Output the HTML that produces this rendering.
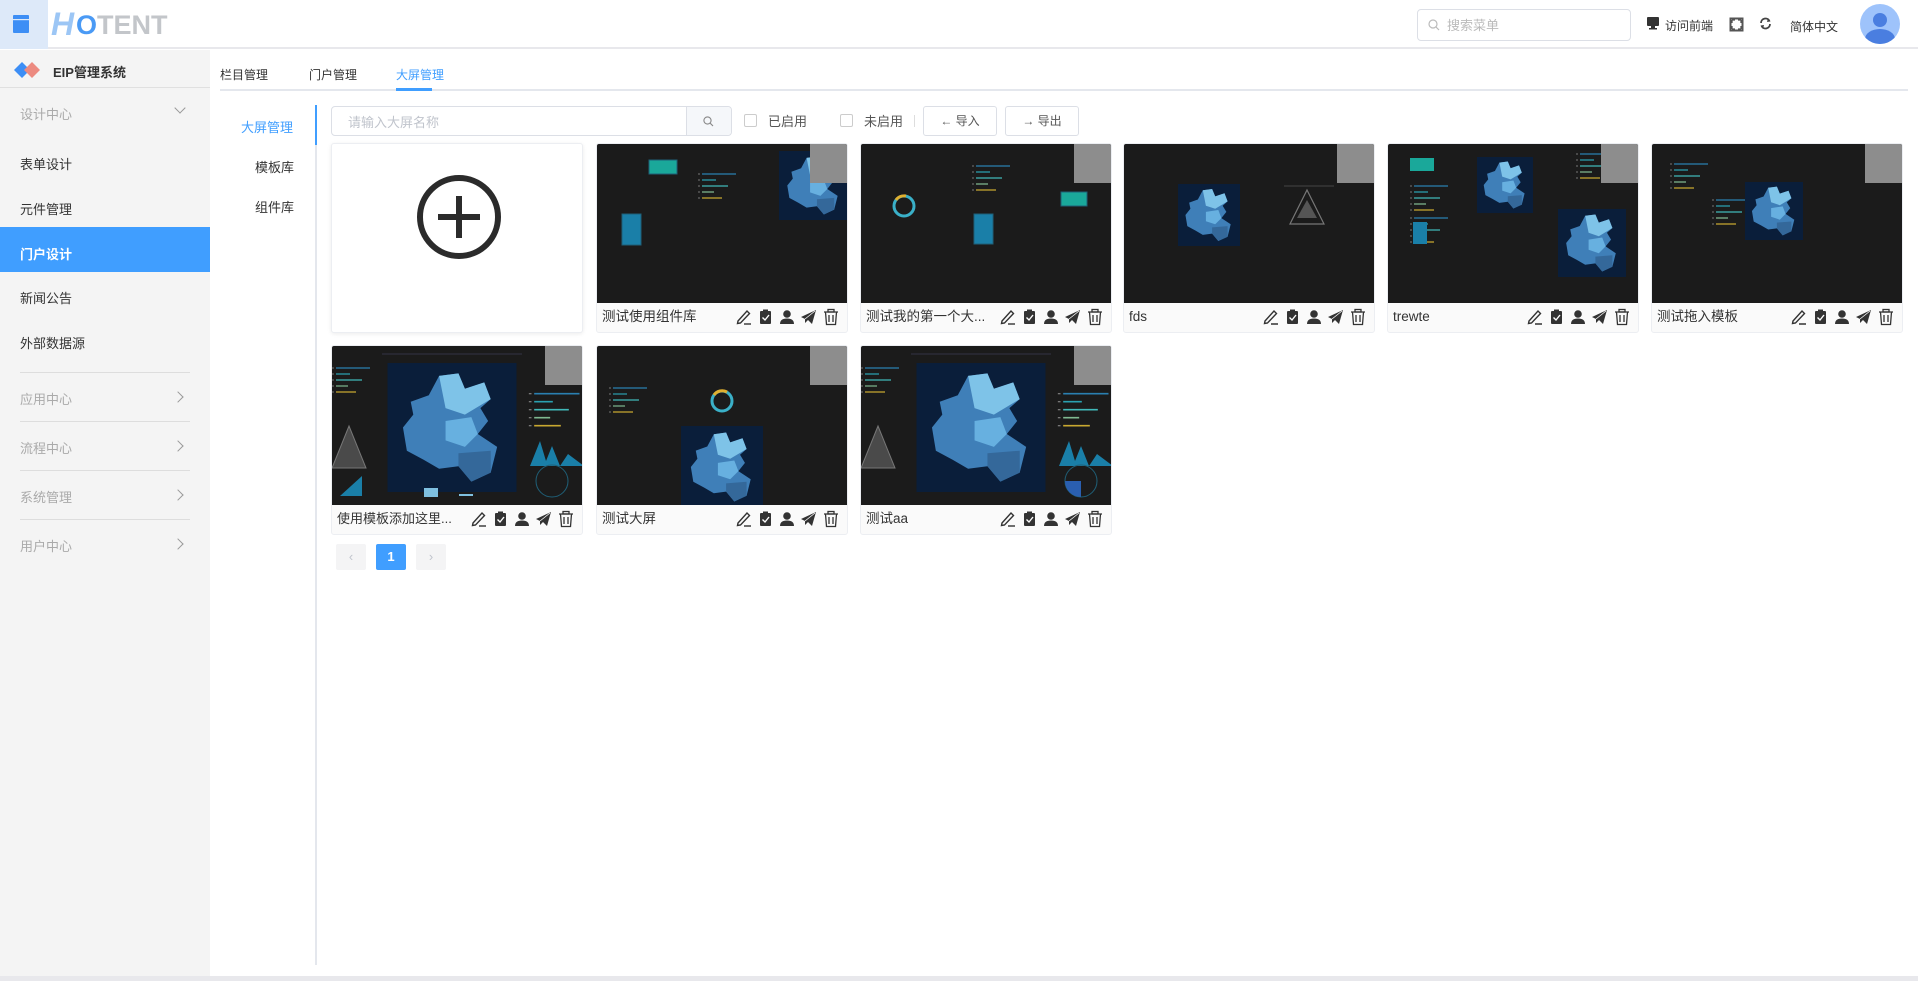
<!DOCTYPE html>
<html><head><meta charset="utf-8"><style>
*{box-sizing:border-box;margin:0;padding:0}
body{width:1918px;height:981px;overflow:hidden;background:#fff;font-family:"Liberation Sans","Noto Sans CJK SC",sans-serif;position:relative;color:#333}
.a{position:absolute}
.hdr{left:0;top:0;width:1918px;height:49px;background:#fff;border-bottom:2px solid #e8e8ec}
.side{left:0;top:50px;width:210px;height:931px;background:#f4f4f4}
.si{position:absolute;left:20px;font-size:13px;color:#333}
.sg{position:absolute;left:20px;font-size:13px;color:#aaa}
.sep{position:absolute;left:20px;width:170px;height:1px;background:#ddd}
.chev{position:absolute;left:176px;width:8px;height:8px;border-right:1.5px solid #999;border-top:1.5px solid #999;transform:rotate(45deg)}
.tab{font-size:12px;color:#333;top:66px}
.card{position:absolute;width:252px;height:190px;border:1px solid #eceef2;border-radius:3px;background:#fafafa;overflow:hidden}
.img{position:absolute;left:0;top:0;width:252px;height:159px;background:#1b1b1b}
.cor{position:absolute;right:0;top:0;width:39px;height:39px;background:#8d8d8d}
.ft{position:absolute;left:5px;top:163px;height:20px;line-height:20px;font-size:13.5px;color:#333}
.ic{position:absolute;top:164px}
.btn{position:absolute;top:106px;height:30px;border:1px solid #dcdfe6;border-radius:3px;font-size:12px;color:#555;text-align:center;line-height:28px;background:#fff}
.cb{position:absolute;top:114px;width:13px;height:13px;border:1px solid #ccc;border-radius:2px;background:#fff}
.pg{position:absolute;top:544px;width:30px;height:26px;border-radius:2px;background:#f4f4f5;color:#c0c4cc;text-align:center;line-height:26px;font-size:13px}
</style></head><body>
<svg width="0" height="0" style="position:absolute">
<defs>
<symbol id="map" viewBox="0 0 100 100"><rect width="100" height="100" fill="#0a1e3a"/><path d="M40 10 L55 8 L60 20 L75 15 L80 28 L72 35 L78 45 L70 55 L85 65 L80 85 L65 92 L55 80 L40 82 L28 75 L15 68 L12 50 L20 40 L18 30 L32 25 Z" fill="#3f7fb8"/><path d="M40 10 L55 8 L60 20 L75 15 L80 28 L60 40 L45 35 Z" fill="#7ec3e8"/><path d="M45 45 L65 42 L70 55 L60 65 L45 60 Z" fill="#67b0e0"/><path d="M55 70 L80 68 L80 85 L65 92 L55 80Z" fill="#34689a"/></symbol>
<symbol id="bars" viewBox="0 0 40 30"><g stroke-width="1.2"><line x1="4" y1="2" x2="38" y2="2" stroke="#2a7fb0"/><line x1="4" y1="8" x2="18" y2="8" stroke="#2aa0b0"/><line x1="4" y1="14" x2="30" y2="14" stroke="#40b8b8"/><line x1="4" y1="20" x2="16" y2="20" stroke="#7fb890"/><line x1="4" y1="26" x2="24" y2="26" stroke="#c8a830"/></g><g fill="#777"><rect x="0" y="1.5" width="2" height="1"/><rect x="0" y="7.5" width="2" height="1"/><rect x="0" y="13.5" width="2" height="1"/><rect x="0" y="19.5" width="2" height="1"/><rect x="0" y="25.5" width="2" height="1"/></g></symbol>
<symbol id="icons" viewBox="0 0 110 18">
<g fill="none" stroke="#333" stroke-width="1.4"><path d="M3 13 L12 3 L14.5 5.5 L5.5 15 L2.5 15.5 Z"/><line x1="9" y1="16" x2="16" y2="16"/></g>
<rect x="25" y="3" width="11" height="13" rx="1" fill="#333"/><rect x="28" y="1.5" width="5" height="3" fill="#333"/><path d="M27.5 9.5 L30 12 L34 7" stroke="#fff" stroke-width="1.4" fill="none"/>
<circle cx="52" cy="6" r="3.8" fill="#333"/><path d="M45 16 Q45 10.5 52 10.5 Q59 10.5 59 16 Z" fill="#333"/>
<path d="M66 9 L81 2 L77 16 L73 12 L70 15 L70 11 Z" fill="#333"/><path d="M70 11 L80 3" stroke="#fff" stroke-width=".8"/>
<g fill="none" stroke="#333" stroke-width="1.3"><line x1="89" y1="4" x2="103" y2="4"/><rect x="93" y="1.5" width="6" height="2.5"/><path d="M90.5 4 L91.5 16.5 L100.5 16.5 L101.5 4"/><line x1="94" y1="7" x2="94" y2="14"/><line x1="98" y1="7" x2="98" y2="14"/></g>
</symbol>
</defs></svg>

<!-- header -->
<div class="a hdr"></div>
<div class="a" style="left:0;top:0;width:48px;height:49px;background:#dde9f9"></div>
<svg class="a" style="left:13px;top:15px" width="16" height="18"><rect x="0" y="0" width="16" height="18" rx="1" fill="#3d8ef5"/><rect x="0" y="4" width="16" height="1.2" fill="#dde9f9"/></svg>
<div class="a" style="left:51px;top:7px;font-size:32px;font-weight:bold;color:#9cc6f5;font-style:italic;line-height:34px">H</div>
<div class="a" style="left:76px;top:10px;font-size:27px;font-weight:bold;line-height:30px"><span style="color:#4a9af5">O</span><span style="color:#c3c6ca">TENT</span></div>
<div class="a" style="left:1417px;top:9px;width:214px;height:32px;border:1px solid #dcdfe6;border-radius:4px"></div>
<svg class="a" style="left:1428px;top:19px" width="12" height="12"><circle cx="5" cy="5" r="4" fill="none" stroke="#bbb" stroke-width="1.2"/><line x1="8" y1="8" x2="11" y2="11" stroke="#bbb" stroke-width="1.2"/></svg>
<div class="a" style="left:1447px;top:15px;font-size:13px;color:#bbb">搜索菜单</div>
<svg class="a" style="left:1646px;top:16px" width="14" height="14"><rect x="1" y="1" width="12" height="9" rx="1" fill="#333"/><rect x="5" y="10" width="4" height="2" fill="#333"/><rect x="3" y="12" width="8" height="1.5" fill="#333"/></svg>
<div class="a" style="left:1665px;top:17px;font-size:12px;color:#333">访问前端</div>
<svg class="a" style="left:1729px;top:17px" width="15" height="15"><rect x="0.5" y="0.5" width="14" height="14" fill="#555"/><rect x="2.5" y="2.5" width="10" height="10" fill="#fff"/><path d="M3 3h3M3 3v3M12 3h-3M12 3v3M3 12h3M3 12v-3M12 12h-3M12 12v-3" stroke="#555" stroke-width="1.3"/></svg>
<svg class="a" style="left:1759px;top:17px" width="13" height="13"><path d="M2 6 A4.5 4.5 0 0 1 10.5 4 M11 7 A4.5 4.5 0 0 1 2.5 9" fill="none" stroke="#444" stroke-width="1.8"/><path d="M9 1 L11.5 4.5 L8 5Z M4 12 L1.5 8.5 L5 8Z" fill="#444"/></svg>
<div class="a" style="left:1790px;top:18px;font-size:12px;color:#333">简体中文</div>
<div class="a" style="left:1860px;top:4px;width:40px;height:40px;border-radius:50%;background:#9ec3fb;overflow:hidden"><div style="position:absolute;left:13px;top:9px;width:14px;height:14px;border-radius:50%;background:#4a7ee0"></div><div style="position:absolute;left:5px;top:25px;width:30px;height:20px;border-radius:50%;background:#4a7ee0"></div></div>

<!-- sidebar -->
<div class="a side"></div>
<svg class="a" style="left:14px;top:60px" width="28" height="20"><path d="M8 2 L16 10 L8 18 L0 10Z" fill="#3d8ef5"/><path d="M18 2 L26 10 L18 18 L10 10Z" fill="#ec8a80"/></svg>
<div class="a" style="left:53px;top:62px;font-size:13px;font-weight:bold;color:#333">EIP管理系统</div>
<div class="a" style="left:0;top:87px;width:210px;height:1px;background:#e0e0e0"></div>
<div class="sg" style="top:104px">设计中心</div><div class="chev" style="top:104px;transform:rotate(135deg)"></div>
<div class="si" style="top:154px">表单设计</div>
<div class="si" style="top:199px">元件管理</div>
<div class="a" style="left:0;top:227px;width:210px;height:45px;background:#409eff"></div>
<div class="si" style="top:244px;color:#fff;font-weight:bold">门户设计</div>
<div class="si" style="top:288px">新闻公告</div>
<div class="si" style="top:333px">外部数据源</div>
<div class="sep" style="top:372px"></div>
<div class="sg" style="top:389px">应用中心</div><div class="chev" style="top:393px;left:174px"></div>
<div class="sep" style="top:421px"></div>
<div class="sg" style="top:438px">流程中心</div><div class="chev" style="top:442px;left:174px"></div>
<div class="sep" style="top:470px"></div>
<div class="sg" style="top:487px">系统管理</div><div class="chev" style="top:491px;left:174px"></div>
<div class="sep" style="top:519px"></div>
<div class="sg" style="top:536px">用户中心</div><div class="chev" style="top:540px;left:174px"></div>

<!-- tabs -->
<div class="a tab" style="left:220px">栏目管理</div>
<div class="a tab" style="left:309px">门户管理</div>
<div class="a tab" style="left:396px;color:#409eff">大屏管理</div>
<div class="a" style="left:220px;top:89px;width:1688px;height:2px;background:#e4e7ed"></div>
<div class="a" style="left:396px;top:88px;width:36px;height:3px;background:#409eff"></div>

<!-- subnav -->
<div class="a" style="left:315px;top:105px;width:2px;height:860px;background:#e4e7ed"></div>
<div class="a" style="left:315px;top:105px;width:2px;height:40px;background:#409eff"></div>
<div class="a" style="left:241px;top:117px;font-size:13px;color:#409eff">大屏管理</div>
<div class="a" style="left:255px;top:157px;font-size:13px">模板库</div>
<div class="a" style="left:255px;top:197px;font-size:13px">组件库</div>

<!-- toolbar -->
<div class="a" style="left:331px;top:106px;width:401px;height:30px;border:1px solid #dcdfe6;border-radius:4px;background:#fff"></div>
<div class="a" style="left:686px;top:107px;width:45px;height:28px;background:#f5f7fa;border-left:1px solid #dcdfe6;border-radius:0 4px 4px 0"></div>
<svg class="a" style="left:703px;top:116px" width="11" height="11"><circle cx="4.5" cy="4.5" r="3.6" fill="none" stroke="#888" stroke-width="1.1"/><line x1="7.3" y1="7.3" x2="10" y2="10" stroke="#888" stroke-width="1.1"/></svg>
<div class="a" style="left:348px;top:112px;font-size:13px;color:#c0c4cc">请输入大屏名称</div>
<div class="cb" style="left:744px"></div><div class="a" style="left:768px;top:111px;font-size:13px;color:#555">已启用</div>
<div class="cb" style="left:840px"></div><div class="a" style="left:864px;top:111px;font-size:13px;color:#555">未启用</div>
<div class="a" style="left:914px;top:115px;width:1px;height:12px;background:#ddd"></div>
<div class="btn" style="left:923px;width:74px">← 导入</div>
<div class="btn" style="left:1005px;width:74px">→ 导出</div>

<!-- row 1 -->
<div class="card" style="left:331px;top:143px;background:#fff;box-shadow:0 1px 4px rgba(0,0,0,.08)">
<svg class="a" style="left:84px;top:30px" width="86" height="86"><circle cx="43" cy="43" r="39" fill="none" stroke="#2b2b2b" stroke-width="6"/><line x1="43" y1="22" x2="43" y2="64" stroke="#2b2b2b" stroke-width="6"/><line x1="22" y1="43" x2="64" y2="43" stroke="#2b2b2b" stroke-width="6"/></svg></div>

<div class="card" style="left:596px;top:143px"><div class="img"><svg width="252" height="159">
<rect x="52" y="16" width="28" height="14" fill="#1aa89a" stroke="#1f5f77"/><rect x="25" y="70" width="19" height="31" fill="#1a7fa8" stroke="#1f5f77"/><use href="#bars" x="100" y="28" width="42" height="30"/><use href="#map" x="181" y="7" width="71" height="69"/></svg><div class="cor"></div></div>
<div class="ft">测试使用组件库</div><svg class="ic" style="left:137px" width="112" height="18"><use href="#icons"/></svg></div>

<div class="card" style="left:860px;top:143px"><div class="img"><svg width="252" height="159">
<circle cx="43" cy="62" r="10" fill="none" stroke="#3ab0c8" stroke-width="3"/><path d="M35 56 A10 10 0 0 1 45 52" stroke="#e0b030" stroke-width="3" fill="none"/><use href="#bars" x="110" y="20" width="42" height="30"/><rect x="200" y="48" width="26" height="14" fill="#1aa89a" stroke="#1f5f77"/><rect x="113" y="70" width="19" height="30" fill="#1a7fa8" stroke="#1f5f77"/></svg><div class="cor"></div></div>
<div class="ft">测试我的第一个大...</div><svg class="ic" style="left:137px" width="112" height="18"><use href="#icons"/></svg></div>

<div class="card" style="left:1123px;top:143px"><div class="img"><svg width="252" height="159">
<use href="#map" x="50" y="40" width="70" height="62"/><path d="M183 46 L200 80 L166 80Z" fill="none" stroke="#777" stroke-width="1.2"/><path d="M183 56 L193 74 L173 74Z" fill="#555"/><line x1="160" y1="42" x2="210" y2="42" stroke="#444"/></svg><div class="cor"></div></div>
<div class="ft">fds</div><svg class="ic" style="left:137px" width="112" height="18"><use href="#icons"/></svg></div>

<div class="card" style="left:1387px;top:143px"><div class="img"><svg width="252" height="159">
<rect x="22" y="14" width="24" height="13" fill="#1aa89a"/><use href="#bars" x="22" y="40" width="40" height="30"/><use href="#bars" x="22" y="72" width="40" height="30"/><rect x="25" y="78" width="14" height="22" fill="#1a7fa8"/><use href="#map" x="79" y="13" width="76" height="56"/><use href="#map" x="165" y="65" width="78" height="68"/><use href="#bars" x="188" y="8" width="40" height="30"/></svg><div class="cor"></div></div>
<div class="ft">trewte</div><svg class="ic" style="left:137px" width="112" height="18"><use href="#icons"/></svg></div>

<div class="card" style="left:1651px;top:143px"><div class="img"><svg width="252" height="159">
<use href="#bars" x="18" y="18" width="40" height="30"/><use href="#bars" x="60" y="54" width="40" height="30"/><use href="#map" x="89" y="38" width="66" height="58"/></svg><div class="cor"></div></div>
<div class="ft">测试拖入模板</div><svg class="ic" style="left:137px" width="112" height="18"><use href="#icons"/></svg></div>

<!-- row 2 -->
<div class="card" style="left:331px;top:345px"><div class="img"><svg width="252" height="159">
<use href="#map" x="50" y="17" width="140" height="129"/><use href="#bars" x="0" y="20" width="40" height="30"/><path d="M17 80 L34 122 L0 122Z" fill="#4a4a4a" stroke="#777"/><use href="#bars" x="195" y="45" width="57" height="40"/><path d="M198 120 L208 95 L214 115 L220 100 L228 120 L236 108 L252 120Z" fill="#1a7fa8"/><rect x="92" y="142" width="14" height="9" fill="#7fc0e0"/><rect x="127" y="148" width="14" height="2" fill="#7fc0e0"/><path d="M8 150 L30 130 L30 150Z" fill="#1a7fa8"/><circle cx="220" cy="135" r="16" fill="none" stroke="#1f5f77"/><line x1="50" y1="8" x2="190" y2="8" stroke="#334"/></svg><div class="cor"></div></div>
<div class="ft" style="font-size:13px">使用模板添加这里...</div><svg class="ic" style="left:137px" width="112" height="18"><use href="#icons"/></svg></div>

<div class="card" style="left:596px;top:345px"><div class="img"><svg width="252" height="159">
<use href="#bars" x="12" y="36" width="40" height="38"/><circle cx="125" cy="55" r="10" fill="none" stroke="#3ab0c8" stroke-width="3"/><path d="M117 49 A10 10 0 0 1 130 46" stroke="#e0b030" stroke-width="3" fill="none"/><use href="#map" x="84" y="80" width="82" height="82"/></svg><div class="cor"></div></div>
<div class="ft">测试大屏</div><svg class="ic" style="left:137px" width="112" height="18"><use href="#icons"/></svg></div>

<div class="card" style="left:860px;top:345px"><div class="img"><svg width="252" height="159">
<use href="#map" x="50" y="17" width="140" height="129"/><use href="#bars" x="0" y="20" width="40" height="30"/><path d="M17 80 L34 122 L0 122Z" fill="#4a4a4a" stroke="#777"/><use href="#bars" x="195" y="45" width="57" height="40"/><path d="M198 120 L208 95 L214 115 L220 100 L228 120 L236 108 L252 120Z" fill="#1a7fa8"/><circle cx="220" cy="135" r="16" fill="none" stroke="#1f5f77"/><path d="M204 135 A16 16 0 0 0 220 151 L220 135Z" fill="#2a5fb0"/><line x1="50" y1="8" x2="190" y2="8" stroke="#334"/></svg><div class="cor"></div></div>
<div class="ft">测试aa</div><svg class="ic" style="left:137px" width="112" height="18"><use href="#icons"/></svg></div>

<!-- pagination -->
<div class="pg" style="left:336px">‹</div>
<div class="pg" style="left:376px;background:#409eff;color:#fff;font-weight:bold">1</div>
<div class="pg" style="left:416px">›</div>

<div class="a" style="left:0;top:976px;width:1918px;height:5px;background:#e8e8ec"></div>
</body></html>
